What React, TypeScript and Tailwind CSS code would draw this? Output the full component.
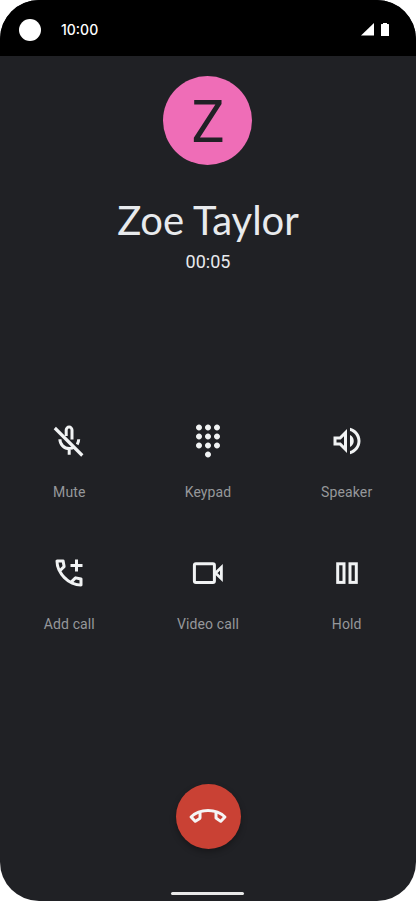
import type { ReactNode } from "react";
import { MdDialpad, MdOutlineVolumeUp } from "react-icons/md";

const handset =
  "M19.95 21q-3.125 0-6.175-1.362t-5.55-3.863q-2.5-2.5-3.862-5.55T3 4.05q0-.45.3-.75t.75-.3H8.1q.35 0 .625.238t.325.562l.65 3.5q.05.4-.025.675T9.4 8.45L6.975 10.9q.5.925 1.187 1.787t1.513 1.663q.775.775 1.625 1.438T13.1 17l2.35-2.35q.225-.225.588-.338t.712-.062l3.45.7q.35.1.575.363T21 15.9v4.05q0 .45-.3.75t-.75.3M6.025 9l1.65-1.65L7.25 5H5.025q.125 1.025.35 2.025T6.025 9m8.95 8.95q.975.425 1.988.675T19 18.95v-2.2l-2.35-.475z";

function MuteIcon() {
  return (
    <svg width="36" height="36" viewBox="0 0 36 36" fill="none" stroke="currentColor" strokeWidth="3">
      <path d="M15.2 13V7a2.9 2.9 0 0 1 5.8 0v9.5" />
      <path d="M8.9 16.2a9.4 9.4 0 0 0 9.4 9.4c2 0 3.8-.6 5.2-1.5M18.2 25v6.8" />
      <path d="M27.7 16.2c0 2-.6 3.7-1.5 5.2" />
      <path d="M3.8 5 31.3 32.5" strokeWidth="3.2" />
    </svg>
  );
}

function AddCallIcon() {
  return (
    <svg width="36" height="36" viewBox="0 0 24 24" fill="currentColor">
      <path d={handset} />
      <path d="M16 3h2v3h3v2h-3v3h-2V8h-3V6h3z" />
    </svg>
  );
}

function EndCallIcon() {
  return (
    <svg width="36" height="36" viewBox="0 0 24 24" fill="currentColor" overflow="visible">
      <path d={handset} transform="rotate(135 12 12)" />
    </svg>
  );
}

function VideoIcon() {
  return (
    <svg width="36" height="36" viewBox="0 0 36 36" fill="none" stroke="currentColor">
      <rect x="4.4" y="8.7" width="20" height="18.8" rx="1.5" strokeWidth="3" />
      <path d="M25.5 18.1 L31.4 12.4 V23.8 Z" strokeWidth="2.8" />
    </svg>
  );
}

function HoldIcon() {
  return (
    <svg width="36" height="36" viewBox="0 0 36 36" fill="none" stroke="currentColor" strokeWidth="3">
      <rect x="8.7" y="8.8" width="6.3" height="18.6" />
      <rect x="21" y="8.8" width="6.3" height="18.6" />
    </svg>
  );
}

function Action({ label, children }: { label: string; children: ReactNode }) {
  return (
    <button className="flex h-[132px] flex-col items-center">
      <span className="flex h-9 items-center text-[#f1f3f4]">{children}</span>
      <span className="mt-[23px] text-sm leading-5 tracking-[0.12px] text-[#96989b]">{label}</span>
    </button>
  );
}

export default function App() {
  return (
    <div className="h-[901px] w-[416px] bg-white">
      <main className="flex h-full flex-col items-center overflow-hidden rounded-[39px] bg-[#202125] font-['Roboto',sans-serif] text-[#e8eaed]">
        <header className="flex h-14 w-full shrink-0 items-center bg-black pt-[3px] pr-[27px] pl-[19px] text-white">
          <span className="size-[22px] rounded-full bg-white" />
          <time className="ml-5 font-['Inter',sans-serif] text-sm font-medium">10:00</time>
          <div className="ml-auto flex items-center gap-[7px] pb-px">
            <svg width="13" height="13" viewBox="0 0 13 13" fill="currentColor"><path d="M13 0V12.5H0Z" /></svg>
            <svg width="8" height="13" viewBox="0 0 8 13" fill="currentColor"><path d="M2 0h4v1H7.5q.5 0 .5.5V13H0V1.5Q0 1 .5 1H2Z" /></svg>
          </div>
        </header>
        <div className="mt-5 mr-px flex size-[89px] shrink-0 items-center justify-center rounded-full bg-[#ef6db7] text-[60px] leading-none text-[#202125]">
          <span className="mt-0.5 scale-x-92">Z</span>
        </div>
        <h1 className="mt-[31px] font-['Lato',sans-serif] text-[40px] leading-[48px] whitespace-nowrap">Zoe Taylor</h1>
        <p className="mt-1.5 text-lg leading-6">00:05</p>
        <section className="mt-[149px] grid w-full grid-cols-3">
          <Action label="Mute"><MuteIcon /></Action>
          <Action label="Keypad"><MdDialpad size={36} /></Action>
          <Action label="Speaker"><MdOutlineVolumeUp size={36} /></Action>
          <Action label="Add call"><AddCallIcon /></Action>
          <Action label="Video call"><VideoIcon /></Action>
          <Action label="Hold"><HoldIcon /></Action>
        </section>
        <button aria-label="End call" className="mt-[97px] flex size-[65px] shrink-0 items-center justify-center rounded-full bg-[#c94134] text-[#f5f5f5] shadow-[0_3px_6px_rgba(0,0,0,0.3)]">
          <EndCallIcon />
        </button>
        <div className="mt-auto mr-px mb-1.5 h-[3px] w-[73px] shrink-0 rounded-full bg-[#e8e8e8]" />
      </main>
    </div>
  );
}
